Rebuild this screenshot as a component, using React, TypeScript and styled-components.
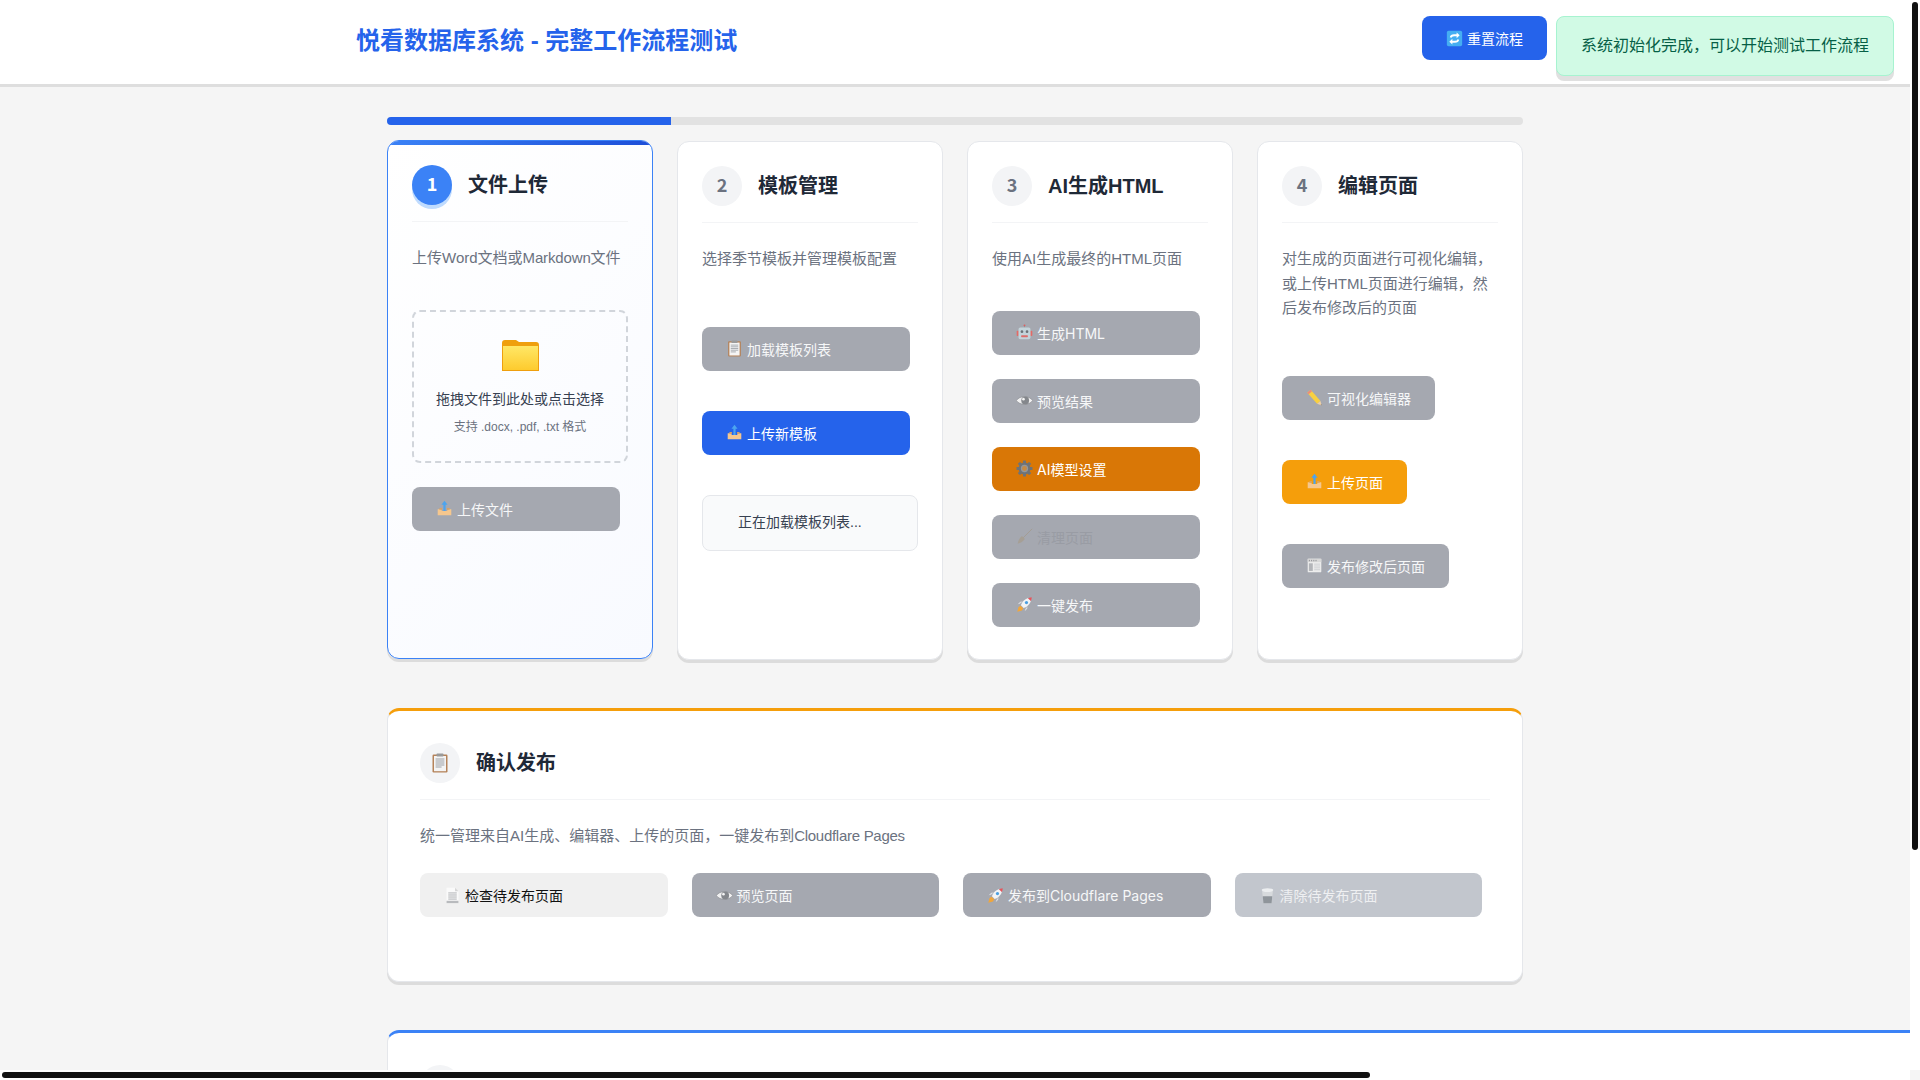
import React from "react";
import styled, { createGlobalStyle, css } from "styled-components";

const Global = createGlobalStyle`
  html, body { margin: 0; padding: 0; height: 100%; overflow: hidden; }
  body {
    font-family: "Liberation Sans", "Noto Sans CJK SC", sans-serif;
    line-height: 1.6;
    color: #1f2937;
    background: #f5f5f5;
  }
  * { box-sizing: border-box; }
`;

const Frame = styled.div`
  display: grid;
  grid-template-columns: 1fr 10px;
  grid-template-rows: 1fr 10px;
  height: 100vh;
  background: #fff;
`;

const Viewport = styled.div`
  min-width: 0;
  min-height: 0;
  overflow: hidden;
  background: #f5f5f5;
`;

const VTrack = styled.div`
  padding: 2px;
  background: #fff;
`;

const VThumb = styled.div`
  width: 6px;
  height: 848px;
  background: #111;
  border-radius: 3px;
`;

const HTrack = styled.div`
  padding: 2px;
  background: #fff;
`;

const HThumb = styled.div`
  width: 1368px;
  height: 6px;
  background: #111;
  border-radius: 3px;
`;

const Corner = styled.div`
  background: #f5f5f5;
`;

const Header = styled.header`
  height: 84px;
  background: #fff;
  box-shadow: 0 3px 0 #dedede;
  display: flex;
  align-items: flex-start;
  padding: 16px 16px 0 356px;
`;

const Title = styled.h1`
  margin: 6px auto 0 0;
  font-size: 24px;
  line-height: 38px;
  font-weight: 700;
  color: #2563eb;
`;

const ButtonBase = css`
  display: inline-flex;
  align-items: center;
  height: 44px;
  padding: 0 24px;
  border: 0;
  border-radius: 8px;
  font-family: "Inter", "Noto Sans CJK SC", sans-serif;
  font-size: 14px;
  font-weight: 400;
  white-space: pre;
`;

type Tone = "primary" | "muted" | "orange" | "amber" | "dim" | "light" | "faded";

const toneStyles: Record<Tone, string> = {
  primary: "background:#2563eb;color:#fff;",
  muted: "background:#a5a8b0;color:#f6f7f8;",
  orange: "background:#d97706;color:#fff;",
  amber: "background:#f59e0b;color:#fff;",
  dim: "background:#a5a8b0;color:#999ca4;",
  light: "background:#f0f0f0;color:#111;",
  faded: "background:#c2c6cd;color:#eff0f2;",
};

const HeaderButton = styled.button`
  ${ButtonBase}
  width: 125px;
  margin-right: 9px;
  background: #2563eb;
  color: #fff;
`;

const Alert = styled.div`
  width: 338px;
  padding: 16px 24px;
  font-size: 16px;
  color: #065f46;
  background: #d1fae5;
  border: 1px solid #a7f3d0;
  border-radius: 8px;
  box-shadow: 0 5px 0 #e0e0e0;
`;

const Main = styled.main`
  width: 1136px;
  margin: 0 auto;
  padding: 33px 0 0;
`;

const Progress = styled.div`
  height: 8px;
  margin-bottom: 16px;
  background: #e2e2e2;
  border-radius: 4px;
  overflow: hidden;
`;

const ProgressFill = styled.div`
  height: 100%;
  background: #2563eb;
`;

const Cards = styled.div`
  display: grid;
  grid-template-columns: repeat(4, 266px);
  gap: 24px;
  margin-bottom: 48px;
`;

const Card = styled.section<{ $active?: boolean }>`
  position: relative;
  overflow: hidden;
  padding: 24px;
  background: #fff;
  border: 1px solid #e5e7eb;
  border-radius: 12px;
  box-shadow: 0 3px 0 #dcdcdc;
  ${(p) =>
    p.$active &&
    css`
      transform: translateY(-1px);
      border-color: #3b82f6;
      background: linear-gradient(135deg, #ffffff, #f8faff);
      &::before {
        content: "";
        position: absolute;
        top: 0;
        left: 0;
        right: 0;
        height: 4px;
        background: linear-gradient(90deg, #3b82f6, #1d4ed8);
      }
    `}
`;

const CardHead = styled.div`
  display: flex;
  align-items: center;
  gap: 16px;
  padding-bottom: 16px;
  margin-bottom: 24px;
  border-bottom: 1px solid #f3f4f6;
`;

const StepBadge = styled.div<{ $active?: boolean }>`
  flex: none;
  width: 40px;
  height: 40px;
  padding-bottom: 3px;
  border-radius: 50%;
  display: flex;
  align-items: center;
  justify-content: center;
  font-family: "Noto Sans CJK SC", sans-serif;
  font-size: 18px;
  font-weight: 700;
  ${(p) =>
    p.$active
      ? "background:#3b82f6;color:#fff;box-shadow:0 4px 0 #bfdbfe;"
      : "background:#f3f4f6;color:#6b7280;"}
`;

const IconBadge = styled.div`
  flex: none;
  width: 40px;
  height: 40px;
  border-radius: 50%;
  display: flex;
  align-items: center;
  justify-content: center;
  background: #f3f4f6;
`;

const CardTitle = styled.h2`
  margin: 0;
  font-size: 20px;
  line-height: 32px;
  font-weight: 700;
  color: #1f2937;
`;

const Desc = styled.p<{ $tail?: number }>`
  margin: 0 0 ${(p) => p.$tail ?? 39}px;
  font-size: 15px;
  line-height: 24.5px;
  color: #6b7280;
`;

const LatinRun = styled.span<{ $track: number }>`
  letter-spacing: ${(p) => p.$track}px;
`;

const DropZone = styled.div`
  height: 153px;
  margin-bottom: 24px;
  padding-top: 28px;
  border: 2px dashed #d1d5db;
  border-radius: 8px;
  text-align: center;
`;

const DropArt = styled.svg`
  display: block;
  width: 37px;
  height: 31px;
  margin: 0 auto 17px;
`;

const DropText = styled.div`
  font-size: 14px;
  line-height: 22px;
  color: #374151;
  margin-bottom: 7px;
`;

const DropHint = styled.div`
  font-size: 12px;
  line-height: 20px;
  color: #6b7280;
`;

const Stack = styled.div<{ $gap: number; $spread?: boolean }>`
  display: flex;
  flex-direction: column;
  align-items: flex-start;
  gap: ${(p) => p.$gap}px;
  ${(p) => p.$spread && "padding: 16px 0;"}
`;

const ActionButton = styled.button<{ $tone: Tone; $fit?: boolean }>`
  ${ButtonBase}
  ${(p) => toneStyles[p.$tone]}
  width: ${(p) => (p.$fit ? "auto" : "calc(100% - 8px)")};
  margin-bottom: 8px;
  flex: none;
`;

const Loading = styled.div`
  height: 56px;
  padding-left: 35px;
  display: flex;
  align-items: center;
  font-size: 14px;
  color: #374151;
  background: #f9fafb;
  border: 1px solid #e5e7eb;
  border-radius: 8px;
  width: 100%;
`;

const Panel = styled.section<{ $accent: string; $wide?: boolean }>`
  padding: 32px;
  background: #fff;
  border: 1px solid #e5e7eb;
  border-top: 3px solid ${(p) => p.$accent};
  border-radius: 12px;
  box-shadow: 0 3px 0 #dcdcdc;
  margin-bottom: 48px;
  ${(p) => p.$wide && "width: 2272px; height: 311px;"}
`;

const PanelGrid = styled.div`
  display: grid;
  grid-template-columns: repeat(4, 1fr);
  gap: 16px;
  padding-bottom: 24px;
`;

const Glyph = styled.svg<{ $fade?: boolean }>`
  flex: none;
  width: 17px;
  height: 17px;
  margin-right: 4px;
  ${(p) => p.$fade && "opacity: .45;"}
`;

const BadgeGlyph = styled.svg`
  width: 20px;
  height: 20px;
`;

const ClipboardArt = () => (
  <>
    <rect x="2.5" y="1.5" width="15" height="18" rx="1.2" fill="#b5835a" />
    <rect x="4" y="3" width="12" height="15.2" fill="#f4f4f4" />
    <rect x="6.5" y="0.6" width="7" height="3" rx=".8" fill="#9a9a9a" />
    <path d="M5.6 6h8.8M5.6 8h8.8M5.6 10h8.8M5.6 12h8.8M5.6 14h6" stroke="#9ca0a6" strokeWidth="1" />
  </>
);

const art: Record<string, React.ReactNode> = {
  reset: (
    <>
      <rect x="1" y="1" width="18" height="18" rx="2" fill="#45aef2" />
      <path d="M4.5 8.5 a5 4 0 0 1 5-3.5 h3 v-2.2 l3.6 3.4-3.6 3.4 V7.3 h-3 a3 2 0 0 0-3 1.9z" fill="#fff" />
      <path d="M15.5 11.5 a5 4 0 0 1-5 3.5 h-3 v2.2 l-3.6-3.4 3.6-3.4 v2.3 h3 a3 2 0 0 0 3-1.9z" fill="#fff" />
    </>
  ),
  upload: (
    <>
      <path d="M2 11 h4 l1 2 h6 l1-2 h4 v7 H2z" fill="#f5c78e" />
      <path d="M4 9.5 h3 v2 H4z M13 9.5 h3 v2 h-3z" fill="#d9a163" />
      <path d="M10 1 l3.6 4.6 H11.3 V13 H8.7 V5.6 H6.4z" fill="#4ca4ef" />
    </>
  ),
  clipboard: <ClipboardArt />,
  robot: (
    <>
      <path d="M10 1v3" stroke="#8b979c" strokeWidth="1.2" />
      <circle cx="10" cy="1.6" r="1.1" fill="#e25b5b" />
      <rect x="0.8" y="8" width="2.4" height="6" rx=".8" fill="#e36a66" />
      <rect x="16.8" y="8" width="2.4" height="6" rx=".8" fill="#e36a66" />
      <rect x="3" y="4" width="14" height="14" rx="2" fill="#c3d4da" />
      <circle cx="7" cy="9" r="1.6" fill="#6a7377" />
      <circle cx="13" cy="9" r="1.6" fill="#6a7377" />
      <rect x="6" y="13.2" width="8" height="2.4" rx=".8" fill="#dd6d6a" />
    </>
  ),
  eye: (
    <>
      <path d="M0.5 10 C4 4 16 4 19.5 10 C16 16 4 16 0.5 10z" fill="#f0f0f1" stroke="#8a8c90" strokeWidth=".7" />
      <circle cx="10.8" cy="10" r="4.6" fill="#84878c" />
      <circle cx="8.8" cy="8.4" r="1.5" fill="#f4f4f4" />
    </>
  ),
  gear: (
    <g fill="#6f7377">
      {[0, 45, 90, 135, 180, 225, 270, 315].map((a) => (
        <rect key={a} x="8.2" y="0.6" width="3.6" height="4" rx=".6" transform={`rotate(${a} 10 10)`} />
      ))}
      <circle cx="10" cy="10" r="7" />
      <circle cx="10" cy="10" r="3.6" fill="#c58a45" />
      <circle cx="10" cy="10" r="3.6" fill="none" stroke="#93979b" strokeWidth="1.4" />
    </g>
  ),
  broom: (
    <>
      <path d="M19 1 L8 12" stroke="#a08b6c" strokeWidth="1" />
      <path d="M7 9.5 L10.5 13 C8 16 5 18 2 18.5 C2.4 15 4.5 11.5 7 9.5z" fill="#a89676" />
    </>
  ),
  rocket: (
    <>
      <path d="M5.5 11.5 L3 13 1.5 18.5 7 17 8.5 14.5z" fill="#f0a63c" />
      <path d="M4.6 9 L2 9.8 5 6.8 8 6.5z M11 15.4 L10.2 18 13.2 15 13.5 12z" fill="#d9dde0" />
      <path d="M5.8 11 C7 6.5 11 3.4 14.4 2.4 L17.6 5.6 C16.6 9 13.5 13 9 14.2z" fill="#f2f3f4" />
      <path d="M14 2.5 C15.5 2 17.5 1.6 18.6 1.4 C18.4 2.5 18 4.5 17.5 6z" fill="#e8535a" />
      <circle cx="12.3" cy="7.7" r="1.9" fill="#4b9fe0" />
    </>
  ),
  pencil: (
    <>
      <path d="M1.5 4.5 L5.5 1 L17 14 L13 17.4z" fill="#f9d040" />
      <path d="M1.5 4.5 L5.5 1 L7 2.8 L3 6.3z" fill="#ea8c7d" />
      <path d="M13 17.4 L17 14 L18.6 19.4z" fill="#eccfa6" />
      <path d="M17.2 18.6 L18.1 17.8 L18.6 19.4z" fill="#555" />
    </>
  ),
  news: (
    <>
      <rect x="2" y="2" width="16" height="16" rx="1" fill="#ededed" />
      <rect x="2" y="2" width="16" height="4" fill="#d8d8d8" />
      <path d="M4 3.4v1.6M6.6 3.4v1.6M9.2 3.4v1.6M11.8 3.4v1.6" stroke="#85878b" strokeWidth="1" />
      <rect x="3.4" y="7.4" width="4.6" height="9" fill="#b3b5b9" />
      <path d="M9.6 8.4h7M9.6 10.6h7M9.6 12.8h7M9.6 15h7" stroke="#c8cacd" strokeWidth="1" />
    </>
  ),
  doc: (
    <>
      <path d="M3 1 H13 L17 5 V19 H3z" fill="#fafafa" />
      <path d="M13 1 L17 5 H13z" fill="#d5d5d5" />
      <path d="M5 7h10M5 9.4h10M5 11.8h10M5 14.2h10" stroke="#a4a6aa" strokeWidth="1" />
      <rect x="3" y="16.2" width="14" height="2.8" fill="#b8babd" />
    </>
  ),
  trash: (
    <>
      <path d="M3.6 4 H16.4 L14.8 19 H5.2z" fill="#d7dadd" />
      <path d="M4.4 11 H15.6 L14.8 19 H5.2z" fill="#8f959b" />
      <ellipse cx="10" cy="3.6" rx="6.8" ry="2.2" fill="#eceef0" />
    </>
  ),
};

const Em: React.FC<{ name: string; fade?: boolean }> = ({ name, fade }) => (
  <Glyph viewBox="0 0 20 20" $fade={fade} aria-hidden="true">
    {art[name]}
  </Glyph>
);

const App: React.FC = () => (
  <>
    <Global />
    <Frame>
      <Viewport>
        <Header>
          <Title>悦看数据库系统 - 完整工作流程测试</Title>
          <HeaderButton><Em name="reset" />重置流程</HeaderButton>
          <Alert>系统初始化完成，可以开始测试工作流程</Alert>
        </Header>
        <Main>
          <Progress>
            <ProgressFill style={{ width: "25%" }} />
          </Progress>
          <Cards>
            <Card $active>
              <CardHead>
                <StepBadge $active>1</StepBadge>
                <CardTitle>文件上传</CardTitle>
              </CardHead>
              <Desc>上传Word文档或<LatinRun $track={-0.15}>Markdown</LatinRun>文件</Desc>
              <DropZone>
                <DropArt viewBox="0 0 37 31" aria-hidden="true">
                  <defs>
                    <linearGradient id="folderFace" x1="0" y1="0" x2="0" y2="1">
                      <stop offset="0" stopColor="#ffe766" />
                      <stop offset="1" stopColor="#fdcb2e" />
                    </linearGradient>
                  </defs>
                  <path d="M0 3 Q0 0 3 0 H14 L17 2 H34 Q37 2 37 5 V31 H0z" fill="#ef9f0e" />
                  <rect x="1" y="6" width="35" height="24" fill="url(#folderFace)" />
                </DropArt>
                <DropText>拖拽文件到此处或点击选择</DropText>
                <DropHint>支持 .docx, .pdf, .txt 格式</DropHint>
              </DropZone>
              <Stack $gap={16}>
                <ActionButton $tone="muted"><Em name="upload" />上传文件</ActionButton>
              </Stack>
            </Card>
            <Card>
              <CardHead>
                <StepBadge>2</StepBadge>
                <CardTitle>模板管理</CardTitle>
              </CardHead>
              <Desc>选择季节模板并管理模板配置</Desc>
              <Stack $gap={32} $spread>
                <ActionButton $tone="muted"><Em name="clipboard" />加载模板列表</ActionButton>
                <ActionButton $tone="primary"><Em name="upload" />上传新模板</ActionButton>
                <Loading>正在加载模板列表...</Loading>
              </Stack>
            </Card>
            <Card>
              <CardHead>
                <StepBadge>3</StepBadge>
                <CardTitle>AI生成HTML</CardTitle>
              </CardHead>
              <Desc>使用AI生成最终的HTML页面</Desc>
              <Stack $gap={16}>
                <ActionButton $tone="muted"><Em name="robot" />生成HTML</ActionButton>
                <ActionButton $tone="muted"><Em name="eye" />预览结果</ActionButton>
                <ActionButton $tone="orange"><Em name="gear" />AI模型设置</ActionButton>
                <ActionButton $tone="dim"><Em name="broom" fade />清理页面</ActionButton>
                <ActionButton $tone="muted"><Em name="rocket" />一键发布</ActionButton>
              </Stack>
            </Card>
            <Card>
              <CardHead>
                <StepBadge>4</StepBadge>
                <CardTitle>编辑页面</CardTitle>
              </CardHead>
              <Desc>对生成的页面进行可视化编辑，或上传HTML页面进行编辑，然后发布修改后的页面</Desc>
              <Stack $gap={32} $spread>
                <ActionButton $tone="muted" $fit><Em name="pencil" />可视化编辑器</ActionButton>
                <ActionButton $tone="amber" $fit><Em name="upload" />上传页面</ActionButton>
                <ActionButton $tone="muted" $fit><Em name="news" />发布修改后页面</ActionButton>
              </Stack>
            </Card>
          </Cards>
          <Panel $accent="#f59e0b">
            <CardHead>
              <IconBadge>
                <BadgeGlyph viewBox="0 0 20 20" aria-hidden="true"><ClipboardArt /></BadgeGlyph>
              </IconBadge>
              <CardTitle>确认发布</CardTitle>
            </CardHead>
            <Desc $tail={25}>统一管理来自AI生成、编辑器、上传的页面，一键发布到<LatinRun $track={-0.28}>Cloudflare Pages</LatinRun></Desc>
            <PanelGrid>
              <ActionButton $tone="light"><Em name="doc" />检查待发布页面</ActionButton>
              <ActionButton $tone="muted"><Em name="eye" />预览页面</ActionButton>
              <ActionButton $tone="muted"><Em name="rocket" />发布到Cloudflare Pages</ActionButton>
              <ActionButton $tone="faded"><Em name="trash" />清除待发布页面</ActionButton>
            </PanelGrid>
          </Panel>
          <Panel $accent="#3b82f6" $wide>
            <IconBadge />
          </Panel>
        </Main>
      </Viewport>
      <VTrack><VThumb /></VTrack>
      <HTrack><HThumb /></HTrack>
      <Corner />
    </Frame>
  </>
);

export default App;
